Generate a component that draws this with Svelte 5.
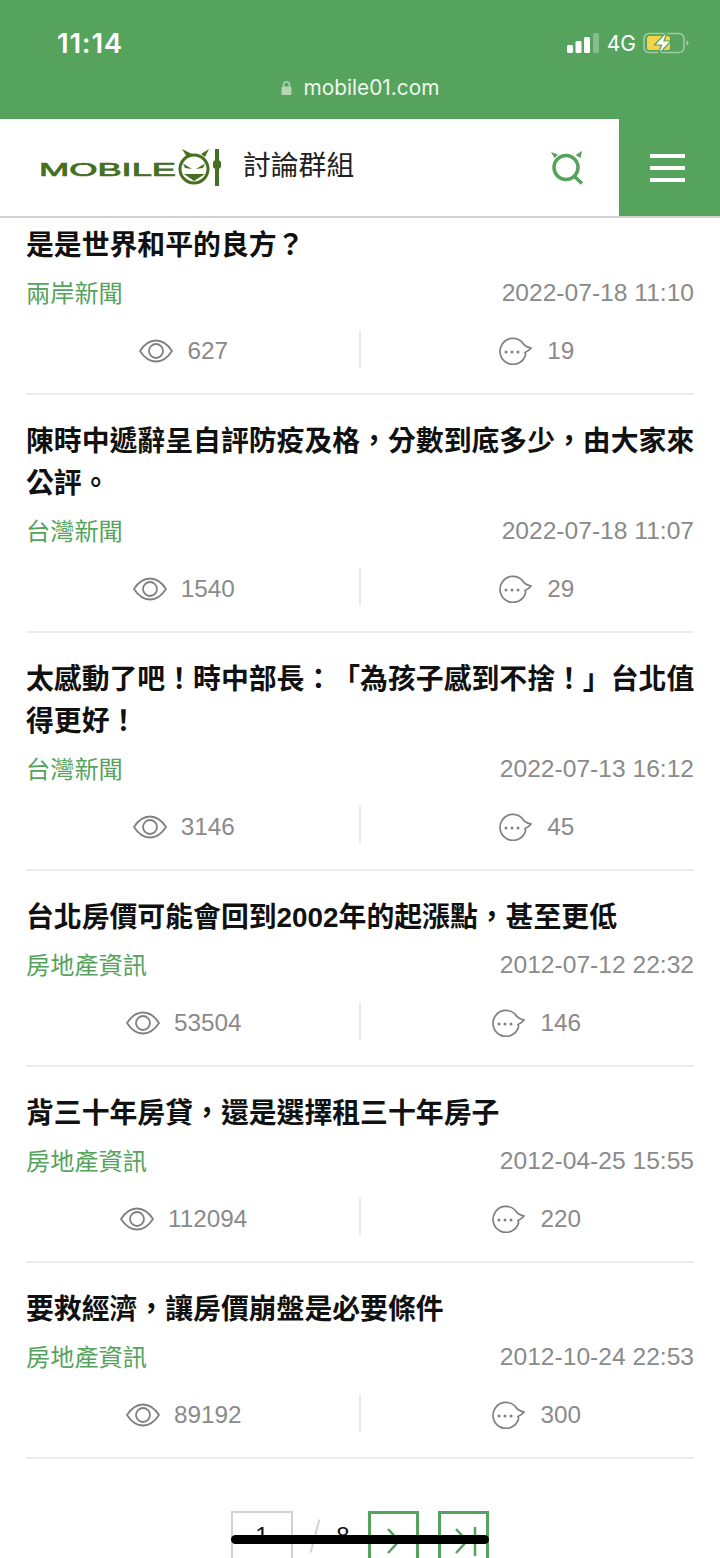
<script lang="ts">
  const posts = [
    { title: "是是世界和平的良方？", cat: "兩岸新聞", date: "2022-07-18 11:10", views: "627", replies: "19" },
    { title: "陳時中遞辭呈自評防疫及格，分數到底多少，由大家來公評。", cat: "台灣新聞", date: "2022-07-18 11:07", views: "1540", replies: "29" },
    { title: "太感動了吧！時中部長：「為孩子感到不捨！」台北值得更好！", cat: "台灣新聞", date: "2022-07-13 16:12", views: "3146", replies: "45" },
    { title: "台北房價可能會回到2002年的起漲點，甚至更低", cat: "房地產資訊", date: "2012-07-12 22:32", views: "53504", replies: "146" },
    { title: "背三十年房貸，還是選擇租三十年房子", cat: "房地產資訊", date: "2012-04-25 15:55", views: "112094", replies: "220" },
    { title: "要救經濟，讓房價崩盤是必要條件", cat: "房地產資訊", date: "2012-10-24 22:53", views: "89192", replies: "300" },
  ];
</script>

<div class="page">
  <header>
    <div class="status">
      <span class="time">11:14</span>
      <div class="indicators">
        <svg class="signal" viewBox="0 0 32 20" width="32" height="20">
          <rect x="0" y="12" width="6" height="8" rx="1.5" fill="#fff" />
          <rect x="8.5" y="8" width="6" height="12" rx="1.5" fill="#fff" />
          <rect x="17" y="4" width="6" height="16" rx="1.5" fill="#fff" />
          <rect x="26" y="0" width="6" height="20" rx="1.5" fill="#fff" fill-opacity="0.3" />
        </svg>
        <span class="net">4G</span>
        <svg class="battery" viewBox="0 0 46 24" width="46" height="24">
          <rect x="1" y="2.5" width="40" height="19" rx="5" fill="none" stroke="#fff" stroke-opacity="0.45" stroke-width="1.5" />
          <rect x="4" y="5" width="23" height="14" rx="2.5" fill="#f7d34a" />
          <path d="M43.5 9.5c1.5.6 2 1.5 2 2.5s-.5 1.900-2 2.500z" fill="#fff" fill-opacity="0.5" />
          <path d="M24.500 0 11.500 14h7l-3.500 10L28 10h-7z" fill="#fff" stroke="#55a35c" stroke-width="1.200" />
        </svg>
      </div>
    </div>
    <div class="url">
      <svg viewBox="0 0 11 14" width="11" height="14">
        <path d="M2.500 6V4a3 3 0 0 1 6 0v2" fill="none" stroke="#b4d6b7" stroke-width="1.400" />
        <rect x="0.500" y="5.500" width="10" height="8.500" rx="1.500" fill="#b4d6b7" />
      </svg>
      <span>mobile01.com</span>
    </div>
    <div class="navbar">
      <div class="brand">
        <svg class="logo" viewBox="0 0 182 38" width="182" height="38">
          <text x="0" y="27" textLength="137" lengthAdjust="spacingAndGlyphs" class="logo-text">MOBILE</text>
          <circle cx="155" cy="20" r="14" fill="none" stroke="#44701f" stroke-width="3" />
          <path d="M143 0l10 5-5 3zM170 0l-8 5 4 3z" fill="#44701f" />
          <path d="M144 14.500l9 5.500-7-1zM166 14.500l-9 5.500 7-1zM145 25l21 0-11 7z" fill="#44701f" />
          <path d="M176 0h4v11l2 2v5l-2 2v17h-4V20l-2-2v-5l2-2z" fill="#44701f" />
        </svg>
        <span class="section">討論群組</span>
      </div>
      <button class="search" aria-label="search">
        <svg viewBox="0 0 34 34" width="34" height="34">
          <circle cx="15" cy="16.500" r="12" fill="none" stroke="#55a35c" stroke-width="3.500" />
          <path d="M23.500 25.500 31 32.500" fill="none" stroke="#55a35c" stroke-width="3.500" />
          <path d="M0 1l7 2.500-3.500 3.500zM31 0l-1.500 7-5-3z" fill="#55a35c" />
        </svg>
      </button>
      <button class="menu" aria-label="menu">
        <span></span>
        <span></span>
        <span></span>
      </button>
    </div>
  </header>

  <main>
    {#each posts as post}
      <article>
        <h2>{post.title}</h2>
        <div class="meta">
          <span class="cat">{post.cat}</span>
          <span class="date">{post.date}</span>
        </div>
        <div class="stats">
          <div class="stat views">
            <svg viewBox="0 0 34 24" width="34" height="24">
              <path d="M1 12C5.500 5 11 1.500 17 1.500S28.500 5 33 12c-4.500 7-10 10.500-16 10.500S5.500 19 1 12z" fill="none" stroke="#808080" stroke-width="1.800" />
              <circle cx="17" cy="12" r="7" fill="none" stroke="#808080" stroke-width="1.800" />
            </svg>
            <span>{post.views}</span>
          </div>
          <div class="stat replies">
            <svg viewBox="0 0 34 28" width="34" height="28">
              <path d="M27.500 18A13 13 0 1 1 24 5c1.500 2.500 4 5 9 6-1.500 2-3.500 3.500-6 4.500.4 1 .7 1.500.5 2.500z" fill="none" stroke="#808080" stroke-width="1.700" />
              <circle cx="8" cy="15" r="1.500" fill="#808080" />
              <circle cx="14" cy="15" r="1.500" fill="#808080" />
              <circle cx="20" cy="15" r="1.500" fill="#808080" />
            </svg>
            <span>{post.replies}</span>
          </div>
        </div>
      </article>
    {/each}

    <nav class="pager">
      <span class="current">1</span>
      <span class="slash"></span>
      <span class="total">8</span>
      <button class="arrow" aria-label="next">
        <svg viewBox="0 0 46 46" width="46" height="46">
          <path d="M17 11 28 23 17 35" fill="none" stroke="#55a35c" stroke-width="2.500" />
        </svg>
      </button>
      <button class="arrow" aria-label="last">
        <svg viewBox="0 0 46 46" width="46" height="46">
          <path d="M15 11 26 23 15 35M34 9v29" fill="none" stroke="#55a35c" stroke-width="2.500" />
        </svg>
      </button>
    </nav>
  </main>

  <div class="home-bar"></div>
</div>

<style>
  :global(body) {
    margin: 0;
    background: #fff;
  }

  .page {
    position: relative;
    width: 720px;
    height: 1558px;
    overflow: hidden;
    font-family: "Liberation Sans", "Noto Sans CJK TC", sans-serif;
    background: #fff;
    text-spacing-trim: space-all;
  }

  header {
    position: relative;
    z-index: 2;
    background: #55a35c;
  }

  .status {
    display: flex;
    justify-content: space-between;
    align-items: center;
    height: 58px;
    padding: 28px 31px 0 57px;
    box-sizing: border-box;
    color: #fff;
  }

  .time {
    font-family: Inter, sans-serif;
    font-size: 27.500px;
    font-weight: 600;
    letter-spacing: 0.8px;
  }

  .indicators {
    display: flex;
    align-items: center;
  }

  .net {
    margin: 0 7px 0 8px;
    font-family: Inter, sans-serif;
    font-size: 21px;
  }

  .url {
    display: flex;
    justify-content: center;
    align-items: center;
    gap: 12px;
    height: 61px;
    padding-bottom: 2px;
    box-sizing: border-box;
    color: #f0f7f0;
    font-family: Inter, sans-serif;
    font-size: 20.800px;
  }

  .navbar {
    display: flex;
    align-items: stretch;
    height: 97px;
    background: #fff;
    border-bottom: 2px solid #d2d2d2;
    box-sizing: content-box;
  }

  .brand {
    flex: 1;
    display: flex;
    align-items: center;
    padding-left: 39px;
  }

  .logo-text {
    font-family: "Liberation Sans", sans-serif;
    font-size: 18px;
    font-weight: 400;
    fill: #44701f;
    stroke: #44701f;
    stroke-width: 0.7px;
  }

  .section {
    margin: 0 0 10px 22px;
    font-size: 27.800px;
    color: #222;
  }

  button {
    padding: 0;
    border: none;
    background: none;
  }

  .search {
    display: flex;
    align-items: center;
    margin-right: 34px;
  }

  .menu {
    width: 101px;
    padding-right: 4px;
    box-sizing: border-box;
    background: #55a35c;
    display: flex;
    flex-direction: column;
    justify-content: center;
    align-items: center;
    gap: 8px;
  }

  .menu span {
    width: 35px;
    height: 4px;
    background: #fff;
  }

  main {
    margin-top: -19px;
    padding: 0 26px;
  }

  article {
    padding: 26px 0 25px;
    border-bottom: 2px solid #ececec;
  }

  h2 {
    margin: 0 -4px 0 0;
    font-size: 27.850px;
    line-height: 42px;
    font-weight: 700;
    color: #111;
  }

  .meta {
    display: flex;
    justify-content: space-between;
    align-items: center;
    height: 34px;
    margin-top: 7px;
  }

  .cat {
    font-size: 24.200px;
    color: #55a35c;
  }

  .date {
    padding-top: 4px;
    font-size: 24.600px;
    color: #8a8a8a;
  }

  .stats {
    display: flex;
    height: 38px;
    margin-top: 22px;
  }

  .stat {
    flex: 1;
    display: flex;
    justify-content: center;
    align-items: center;
    gap: 14px;
    padding-top: 3px;
    font-size: 24.300px;
    color: #8a8a8a;
  }

  .views {
    padding-right: 17px;
    border-right: 2px solid #ececec;
  }

  .replies {
    gap: 15px;
    padding-left: 18px;
  }

  .pager {
    display: flex;
    align-items: flex-start;
    margin-top: 52px;
    padding-left: 205px;
    color: #111;
    font-size: 24px;
  }

  .current {
    width: 58px;
    height: 46px;
    padding-bottom: 14px;
    display: flex;
    justify-content: center;
    align-items: center;
    border: 2px solid #d2d2d2;
  }

  .slash {
    width: 2px;
    height: 34px;
    margin: 8px 0 0 21px;
    background: #d2d2d2;
    transform: rotate(15deg);
  }

  .total {
    width: 30px;
    height: 50px;
    margin: 0 10px 0 12px;
    display: flex;
    justify-content: center;
    align-items: center;
  }

  .arrow {
    width: 51px;
    height: 60px;
    margin-right: 19px;
    border: 3px solid #55a35c;
    box-sizing: border-box;
    display: block;
  }

  .arrow svg {
    display: block;
    margin: -1px 0 0 0;
  }

  .home-bar {
    position: absolute;
    left: 231px;
    top: 1535px;
    width: 258px;
    height: 9px;
    border-radius: 5px;
    background: #000;
    z-index: 3;
  }
</style>
